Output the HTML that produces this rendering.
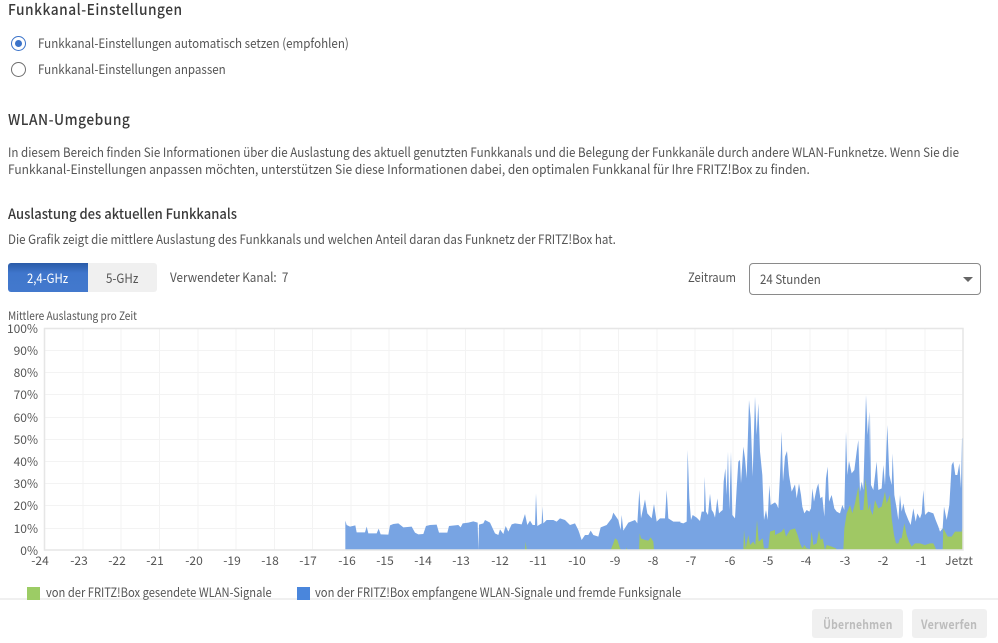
<!DOCTYPE html>
<html lang="de"><head><meta charset="utf-8"><title>Funkkanal-Einstellungen</title>
<style>
html,body{margin:0;padding:0;background:#fff}
body{width:998px;height:643px;overflow:hidden;position:relative;font-family:"Noto Sans CJK JP","Liberation Sans",sans-serif;color:#555}
.t{position:absolute;white-space:nowrap;line-height:20px;font-size:13px;transform-origin:0 50%}
.h{color:#3a3a3a;font-size:15px;font-weight:500;letter-spacing:.55px}
.radio{position:absolute;box-sizing:border-box;width:15px;height:15px;border-radius:50%;border:1.5px solid #6e6e6e;left:11px}
.on{border-color:#3b73c9}
.on:after{content:"";position:absolute;left:2.500px;top:2.500px;width:7px;height:7px;border-radius:50%;background:#3b73c9}
.btn{position:absolute;box-sizing:border-box;text-align:center;font-size:13px;line-height:29px}
.btn span,.g span{display:inline-block}
.foot{position:absolute;left:0;top:598px;width:998px;height:45px;background:#fff;border-top:2px solid #f0f0f0;box-sizing:border-box}
.g{position:absolute;top:609px;height:29px;background:#f0f0f0;border-radius:3px;color:#bcbcbc;font-weight:700;font-size:12.5px;line-height:29px;text-align:center;letter-spacing:.3px}
svg{position:absolute;left:0;top:0}
svg text{font-family:"Noto Sans CJK JP","Liberation Sans",sans-serif;font-size:12px;fill:#555}
</style></head><body>
<div class="t h" style="left:8px;top:0px;transform:scaleX(.916)">Funkkanal-Einstellungen</div>
<div class="radio on" style="top:36px"></div>
<div class="t" style="left:38px;top:33px;transform:scaleX(.891)">Funkkanal-Einstellungen automatisch setzen (empfohlen)</div>
<div class="radio" style="top:62px"></div>
<div class="t" style="left:38px;top:59px;transform:scaleX(.891)">Funkkanal-Einstellungen anpassen</div>
<div class="t h" style="left:8px;top:110px;transform:scaleX(.917)">WLAN-Umgebung</div>
<div class="t" style="left:8px;top:142px;transform:scaleX(.8906)">In diesem Bereich finden Sie Informationen über die Auslastung des aktuell genutzten Funkkanals und die Belegung der Funkkanäle durch andere WLAN-Funknetze. Wenn Sie die</div>
<div class="t" style="left:8px;top:159px;transform:scaleX(.922)">Funkkanal-Einstellungen anpassen möchten, unterstützen Sie diese Informationen dabei, den optimalen Funkkanal für Ihre FRITZ!Box zu finden.</div>
<div class="t" style="left:8px;top:204px;font-weight:500;color:#3a3a3a;font-size:14px;transform:scaleX(.93)">Auslastung des aktuellen Funkkanals</div>
<div class="t" style="left:8px;top:229px;transform:scaleX(.89)">Die Grafik zeigt die mittlere Auslastung des Funkkanals und welchen Anteil daran das Funknetz der FRITZ!Box hat.</div>
<div class="btn" style="left:8px;top:263px;width:80px;height:29px;background:linear-gradient(#2a5ba8,#3f76cc 35%,#4379cd);color:#fff;border-radius:3px 0 0 3px"><span style="transform:scaleX(.875)">2,4-GHz</span></div>
<div class="btn" style="left:88px;top:263px;width:69px;height:29px;background:#f0f0f0;border-radius:0 3px 3px 0"><span style="transform:scaleX(.89)">5-GHz</span></div>
<div class="t" style="left:170px;top:267px;transform:scaleX(.9)">Verwendeter Kanal:&nbsp; 7</div>
<div class="t" style="left:688px;top:267px;transform:scaleX(.87)">Zeitraum</div>
<div style="position:absolute;left:749px;top:263px;width:232px;height:32px;box-sizing:border-box;border:1px solid #8a8a8a;border-radius:4px"></div>
<div class="t" style="left:760px;top:269px;transform:scaleX(.885)">24 Stunden</div>
<div style="position:absolute;left:963px;top:277px;width:0;height:0;border-left:5px solid transparent;border-right:5px solid transparent;border-top:5px solid #666"></div>
<div class="t" style="left:8px;top:306px;font-size:11.5px;transform:scaleX(.878)">Mittlere Auslastung pro Zeit</div>
<svg width="998" height="643" viewBox="0 0 998 643">
<g stroke="#f3f3f3" stroke-width="1" fill="none">
<path d="M44.5 350.5H963M44.5 372.5H963M44.5 394.5H963M44.5 417.5H963M44.5 439.5H963M44.5 461.5H963M44.5 483.5H963M44.5 505.5H963M44.5 528.5H963"/>
<path d="M83 328V550M121 328V550M159.500 328V550M198 328V550M236 328V550M274.500 328V550M312.500 328V550M351 328V550M389 328V550M427 328V550M465.500 328V550M504 328V550M542 328V550M580 328V550M618.500 328V550M657 328V550M695 328V550M733 328V550M771.500 328V550M810 328V550M848 328V550M886 328V550M925 328V550"/>
</g>
<g fill="#78a4e3">
<polygon transform="translate(340 490) scale(.33333)" points="16,180 16,92 20,105 30,110 46,106 50,127 75,127 80,110 85,130 110,130 116,116 122,133 145,134 150,106 160,102 175,100 185,108 190,112 215,110 225,128 235,133 250,132 258,108 270,105 290,104 297,128 322,128 327,108 355,105 362,112 368,100 385,98 400,94 413,98 415,180 417,104 430,100 435,90 450,98 465,130 475,135 480,118 490,132 497,108 505,125 515,103 525,100 545,103 555,72 562,105 570,92 578,105 585,105 588,10 592,108 605,100 607,50 610,100 620,90 640,90 650,95 660,85 675,90 690,105 705,100 715,120 725,150 735,135 745,135 752,122 760,135 775,140 782,112 800,105 815,85 820,68 835,90 842,120 845,75 850,122 865,98 885,90 892,100 898,0 903,85 915,28 922,70 935,85 942,42 950,95 960,85 975,85 980,0 985,85 1000,95 1021,95 1021,180"/>
<polygon transform="translate(680 395) scale(.33333)" points="-1,465 -1,382 10,385 20,380 23,165 28,310 33,375 38,360 50,368 60,378 65,350 72,350 74,245 78,350 84,360 90,296 95,345 100,352 105,368 112,310 117,355 122,350 128,345 131,260 136,220 140,300 144,170 148,345 153,170 157,360 165,370 170,280 175,200 180,195 183,265 190,155 195,190 200,250 207,15 212,70 218,245 225,5 230,120 235,25 240,170 247,240 252,375 258,345 263,375 268,270 272,330 285,322 286,465"/>
<polygon transform="translate(775 395) scale(.33333)" points="-1,465 0,322 5,328 10,340 15,240 20,110 24,260 30,185 36,168 42,240 50,290 60,268 65,310 72,265 78,300 82,335 88,355 95,345 103,350 108,340 112,280 117,320 125,280 130,265 136,310 142,305 148,365 153,250 158,215 162,320 170,300 178,340 185,350 195,355 202,330 208,345 213,110 217,240 222,198 230,235 238,225 245,170 250,135 255,290 260,260 265,285 273,0 278,120 283,50 285,200 286,465"/>
<polygon transform="translate(870 395) scale(.33333)" points="-1,465 0,60 3,270 10,285 20,200 25,285 35,280 40,210 45,270 52,90 58,240 65,270 68,175 73,300 80,340 85,375 90,300 95,350 100,325 105,350 115,375 122,390 130,340 137,380 142,355 150,370 155,355 160,285 165,360 175,350 190,355 197,375 205,395 210,410 218,400 222,335 230,375 238,330 245,210 250,200 256,240 262,240 268,205 273,280 276,130 279,130 279,465"/>
</g>
<g fill="#a0c864">
<polygon transform="translate(340 490) scale(.33333)" points="555,180 557,155 560,180"/>
<polygon transform="translate(340 490) scale(.33333)" points="812,180 820,160 825,145 832,150 840,175 845,180"/>
<polygon transform="translate(340 490) scale(.33333)" points="858,180 860,172 862,180"/>
<polygon transform="translate(340 490) scale(.33333)" points="897,180 899,130 903,145 915,150 925,152 932,142 940,155 942,180"/>
<polygon transform="translate(680 395) scale(.33333)" points="190,465 192,405 197,460 205,420 210,450 220,440 226,450 231,375 236,440 248,430 252,460 265,460 270,410 285,405 286,465"/>
<polygon transform="translate(775 395) scale(.33333)" points="-1,465 0,420 10,415 20,410 27,400 33,425 45,405 60,400 68,420 75,445 82,460 88,450 95,460 105,462 110,410 115,450 125,445 132,405 137,435 143,430 150,465 155,450 170,455 183,460 185,465 205,465 208,400 215,355 225,330 232,355 240,325 250,275 255,345 265,345 272,250 280,345 286,325 286,465"/>
<polygon transform="translate(870 395) scale(.33333)" points="-1,465 0,340 8,360 15,315 25,340 35,335 45,290 50,325 60,300 65,370 72,420 78,445 85,445 90,430 95,430 103,385 110,420 117,440 125,455 135,445 150,445 165,450 180,445 190,445 197,460 197,465 218,465 220,400 233,425 245,425 255,410 275,410 278,395 278,465"/>
</g>
<rect x="44.500" y="328.500" width="918.500" height="221.500" fill="none" stroke="#e6e6e6" stroke-width="1.500"/>
<g text-anchor="end">
<text x="38" y="333">100%</text><text x="38" y="355">90%</text><text x="38" y="377">80%</text><text x="38" y="399">70%</text><text x="38" y="422">60%</text><text x="38" y="444">50%</text><text x="38" y="466">40%</text><text x="38" y="488">30%</text><text x="38" y="510">20%</text><text x="38" y="533">10%</text><text x="38" y="555">0%</text>
</g>
<g text-anchor="middle">
<text x="40" y="565">-24</text><text x="79" y="565">-23</text><text x="117" y="565">-22</text><text x="155" y="565">-21</text><text x="194" y="565">-20</text><text x="232" y="565">-19</text><text x="270" y="565">-18</text><text x="308" y="565">-17</text><text x="347" y="565">-16</text><text x="385" y="565">-15</text><text x="423" y="565">-14</text><text x="461" y="565">-13</text><text x="500" y="565">-12</text><text x="538" y="565">-11</text><text x="577" y="565">-10</text><text x="615" y="565">-9</text><text x="653" y="565">-8</text><text x="691" y="565">-7</text><text x="730" y="565">-6</text><text x="768" y="565">-5</text><text x="806" y="565">-4</text><text x="845" y="565">-3</text><text x="883" y="565">-2</text><text x="921" y="565">-1</text><text x="959" y="565">Jetzt</text>
</g>
</svg>
<div class="foot"></div>
<svg width="998" height="643" viewBox="0 0 998 643">
<rect x="27" y="587" width="13" height="13" fill="#9ccc65"/>
<rect x="297" y="587" width="13" height="13" fill="#4a86dc"/>
</svg>
<div class="t" style="left:46px;top:582px;font-size:12.5px;transform:scaleX(.893)">von der FRITZ!Box gesendete WLAN-Signale</div>
<div class="t" style="left:315px;top:582px;font-size:12.5px;transform:scaleX(.895)">von der FRITZ!Box empfangene WLAN-Signale und fremde Funksignale</div>
<div class="g" style="left:812px;width:91px"><span style="transform:scaleX(.83)">Übernehmen</span></div>
<div class="g" style="left:912px;width:75px"><span style="transform:scaleX(.85)">Verwerfen</span></div>
</body></html>
